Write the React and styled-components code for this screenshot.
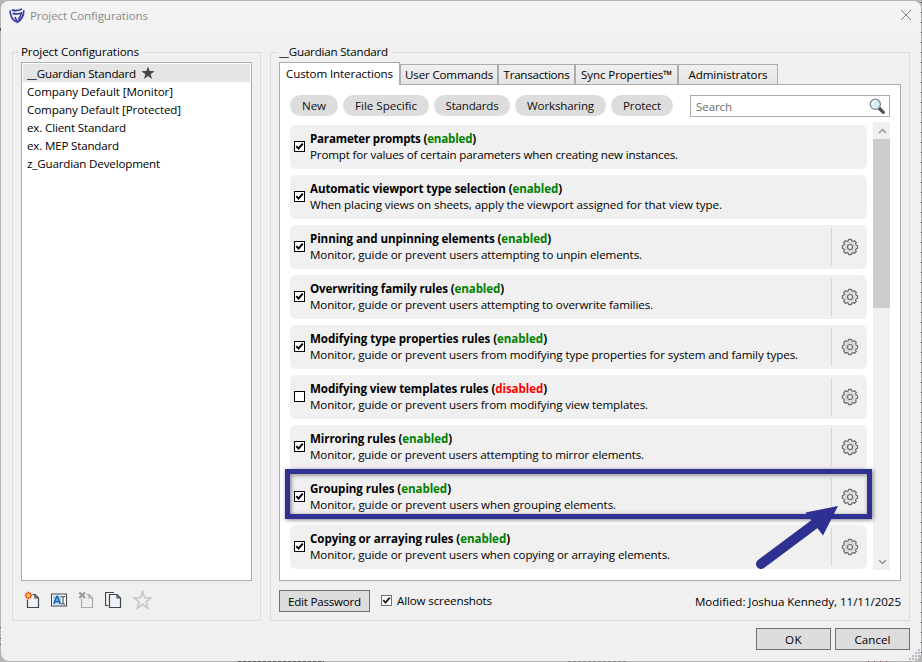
import React, { useLayoutEffect, useRef, useState } from "react"
import styled, { createGlobalStyle, css } from "styled-components"

const GlobalStyle = createGlobalStyle`
    * {
        box-sizing: border-box;
    }
    body {
        margin: 0;
        overflow: hidden;
        font-family: "Open Sans", "Noto Sans", sans-serif;
        font-size: 11.6px;
        line-height: 16px;
        color: #000;
    }
`

const configurations = [
    { name: "__Guardian Standard", width: 109, selected: true },
    { name: "Company Default [Monitor]", width: 146 },
    { name: "Company Default [Protected]", width: 154 },
    { name: "ex. Client Standard", width: 99 },
    { name: "ex. MEP Standard", width: 92 },
    { name: "z_Guardian Development", width: 133 },
]

const tabs = [
    { name: "Custom Interactions", tab: 121, width: 107, active: true },
    { name: "User Commands", tab: 98, width: 88 },
    { name: "Transactions", tab: 77, width: 66 },
    { name: "Sync Properties™", tab: 103, width: 91 },
    { name: "Administrators", tab: 100, width: 79 },
]

const filters = [
    { name: "New", pill: 48, width: 24 },
    { name: "File Specific", pill: 86, width: 62 },
    { name: "Standards", pill: 76, width: 53 },
    { name: "Worksharing", pill: 91, width: 67 },
    { name: "Protect", pill: 62, width: 38 },
]

const rules = [
    { title: "Parameter prompts", enabled: true, titleWidth: 166, text: "Prompt for values of certain parameters when creating new instances.", textWidth: 368 },
    { title: "Automatic viewport type selection", enabled: true, titleWidth: 252, text: "When placing views on sheets, apply the viewport assigned for that view type.", textWidth: 412 },
    { title: "Pinning and unpinning elements", enabled: true, titleWidth: 241, text: "Monitor, guide or prevent users attempting to unpin elements.", textWidth: 332, gear: true },
    { title: "Overwriting family rules", enabled: true, titleWidth: 194, text: "Monitor, guide or prevent users attempting to overwrite families.", textWidth: 343, gear: true },
    { title: "Modifying type properties rules", enabled: true, titleWidth: 237, text: "Monitor, guide or prevent users from modifying type properties for system and family types.", textWidth: 488, gear: true },
    { title: "Modifying view templates rules", enabled: false, titleWidth: 237, text: "Monitor, guide or prevent users from modifying view templates.", textWidth: 338, gear: true },
    { title: "Mirroring rules", enabled: true, titleWidth: 142, text: "Monitor, guide or prevent users attempting to mirror elements.", textWidth: 334, gear: true },
    { title: "Grouping rules", enabled: true, titleWidth: 141, text: "Monitor, guide or prevent users when grouping elements.", textWidth: 306, gear: true, highlighted: true },
    { title: "Copying or arraying rules", enabled: true, titleWidth: 200, text: "Monitor, guide or prevent users when copying or arraying elements.", textWidth: 360, gear: true },
]

const Desktop = styled.div`
    width: 922px;
    height: 662px;
    padding: 1px;
    background:
        repeating-linear-gradient(to bottom, transparent 0 2px, #333 2px 3px, transparent 3px 10px) 921px 0 / 1px 662px no-repeat,
        linear-gradient(#555, #555) 0 28px / 1px 3px no-repeat,
        linear-gradient(#7a5560, #7a5560) 0 627px / 1px 1px no-repeat,
        linear-gradient(#3d7a45, #3d7a45) 0 638px / 1px 1px no-repeat,
        linear-gradient(#7a5560, #7a5560) 0 644px / 1px 1px no-repeat,
        repeating-linear-gradient(to right, #555 0 3px, #999 3px 5px) 238px 661px / 86px 1px no-repeat,
        repeating-linear-gradient(to right, #888 0 3px, #b0b0b0 3px 5px) 568px 661px / 60px 1px no-repeat,
        repeating-linear-gradient(to right, #7a5560 0 1px, #b0b0b0 1px 6px) 868px 661px / 24px 1px no-repeat,
        #b4b4b4;
`

const Window = styled.div`
    width: 920px;
    height: 660px;
    display: flex;
    flex-direction: column;
    position: relative;
    background: #f0f0f0;
    border-radius: 8px;
    overflow: hidden;
`

const TitleBar = styled.header`
    height: 30px;
    flex: none;
    display: flex;
    align-items: center;
    padding: 0 9px 0 8px;
    background: #f3f3f3;
    color: #8b8b8b;
    > svg:last-child {
        margin-left: auto;
        margin-top: -2px;
    }
`

const TitleText = styled.div`
    margin-left: 5px;
`

const Body = styled.main`
    display: flex;
    gap: 9px;
    padding: 13px 11px 0;
`

const Group = styled.fieldset`
    width: ${props => props.$width}px;
    height: 577px;
    min-width: 0;
    margin: 0;
    padding: 2px 8px 0;
    border: 1px solid #dcdcdc;
`

const Legend = styled.legend`
    height: 16px;
    margin-left: -2px;
    padding: 0 4px 0 2px;
`

const ConfigList = styled.ul`
    width: 231px;
    height: 519px;
    margin: 0;
    padding: 1px;
    list-style: none;
    background: #fff;
    border: 1px solid #abadb3;
`

const ConfigItem = styled.li`
    height: 18px;
    display: flex;
    align-items: center;
    gap: 5px;
    padding: 2px 0 0 4px;
    background: ${props => props.$selected ? "#e5e5e5" : "transparent"};
    svg {
        margin-top: -2px;
    }
`

const Toolbar = styled.div`
    display: flex;
    align-items: center;
    height: 20px;
    margin-top: 9px;
    padding-left: 3px;
    gap: 11px;
`

const Tabs = styled.div`
    height: 22px;
    display: flex;
    align-items: flex-end;
`

const Tab = styled.div`
    width: ${props => props.$width}px;
    height: 20px;
    display: flex;
    align-items: center;
    justify-content: center;
    border: 1px solid #acacac;
    border-bottom: 0;
    background: linear-gradient(#f0f0f0, #e5e5e5);
    ${props => props.$active && css`
        height: 23px;
        margin-bottom: -1px;
        background: #fff;
        position: relative;
    `}
`

const TabPanel = styled.section`
    width: 622px;
    height: 497px;
    padding: 10px;
    background: #fff;
    border: 1px solid #acacac;
`

const FilterBar = styled.div`
    display: flex;
    gap: 5px;
`

const Pill = styled.div`
    width: ${props => props.$width}px;
    height: 21px;
    display: flex;
    align-items: center;
    justify-content: center;
    border-radius: 11px;
    background: #ddd;
    color: #111;
`

const SearchBox = styled.div`
    width: 200px;
    height: 22px;
    margin-left: auto;
    display: flex;
    align-items: center;
    justify-content: space-between;
    padding: 2px 3px 0 5px;
    border: 1px solid #abadb3;
    color: #6d6d6d;
    svg {
        margin-top: -2px;
    }
`

const ScrollArea = styled.div`
    display: flex;
    gap: 6px;
    height: 448px;
    margin-top: 5px;
`

const RuleList = styled.div`
    width: 577px;
    display: flex;
    flex-direction: column;
    gap: 6px;
    padding-top: 3px;
`

const RuleCard = styled.div`
    height: 44px;
    flex: none;
    position: relative;
    display: flex;
    align-items: center;
    padding-left: 4px;
    border-radius: 6px;
    background: #f0f0f0;
`

const RuleText = styled.div`
    margin-left: 5px;
    flex: 1;
`

const RuleTitle = styled.div`
    height: 16px;
    font-weight: 700;
`

const RuleInfo = styled.div`
    height: 16px;
`

const Status = styled.span`
    color: ${props => props.$enabled ? "#008000" : "#f00"};
`

const GearCell = styled.div`
    width: 36px;
    height: 38px;
    display: flex;
    align-items: center;
    justify-content: center;
    border-left: 1px solid #d5d5d5;
`

const Box = styled.span`
    width: 11px;
    height: 11px;
    flex: none;
    display: flex;
    background: #fff;
    border: 1px solid ${props => props.$soft ? "#707070" : "#000"};
    margin-bottom: 1px;
`

const Highlight = styled.div`
    position: absolute;
    left: -5px;
    top: -6px;
    width: 587px;
    height: 50px;
    z-index: 2;
    border: 5px solid #2e3192;
    box-shadow: 1px 1px 4px rgba(0, 0, 0, 0.5), inset 1px 1px 4px rgba(0, 0, 0, 0.5);
`

const Arrow = styled.svg`
    position: absolute;
    left: 460px;
    top: 25px;
    z-index: 3;
`

const Scrollbar = styled.div`
    width: 17px;
    height: 448px;
    display: flex;
    flex-direction: column;
    background: #f0f0f0;
`

const ScrollButton = styled.div`
    height: 17px;
    display: flex;
    align-items: center;
    justify-content: center;
    padding-left: 1px;
`

const Thumb = styled.div`
    height: 169px;
    margin-bottom: auto;
    background: #cdcdcd;
`

const PanelFooter = styled.div`
    width: 622px;
    height: 22px;
    margin-top: 9px;
    display: flex;
    align-items: center;
`

const Button = styled.button`
    width: ${props => props.$width}px;
    height: 22px;
    display: flex;
    align-items: center;
    justify-content: center;
    padding: 2px 0 0;
    font: inherit;
    color: #000;
    background: #ddd;
    border: 1px solid #707070;
`

const AllowLabel = styled.label`
    display: flex;
    align-items: center;
    gap: 5px;
    margin-left: 11px;
`

const Modified = styled.div`
    margin-left: auto;
    padding-top: 2px;
`

const DialogButtons = styled.footer`
    display: flex;
    justify-content: flex-end;
    gap: 4px;
    margin-top: 7px;
    padding-right: 11px;
`

const Grip = styled.svg`
    position: absolute;
    right: 0px;
    bottom: 1px;
`

const Line = styled.span`
    display: inline-block;
    white-space: pre;
    vertical-align: top;
`

// tightens or loosens the letters so that a label takes exactly its width
function FitText({ width, children }) {
    const ref = useRef(null)
    const [spacing, setSpacing] = useState(0)

    useLayoutEffect(() => {
        const el = ref.current
        el.style.letterSpacing = "0px"
        const natural = el.getBoundingClientRect().width
        const next = (width - natural) / el.textContent.length
        el.style.letterSpacing = `${next}px`
        setSpacing(next)
    }, [width])

    return <Line ref={ref} style={{ letterSpacing: `${spacing}px` }}>{children}</Line>
}

const Logo = () => (
    <svg width="16" height="16" viewBox="0 0 16 16" fill="none" stroke="#3a3a9c" strokeWidth="1.700">
        <path d="M3 1.900C6 3.200 9.500 2.800 13 1" />
        <path d="M1.100 2.400C1.200 7.400 3 11.300 6.800 13.800" />
        <path d="M14.700 2.200C15 7.400 12.800 11.400 8.300 14.200L6 9" />
        <path d="M3.600 5.400C6.500 6.200 9.500 6 12.300 5 12 7.700 11 9.700 9.200 11.300" />
    </svg>
)

const CloseIcon = () => (
    <svg width="12" height="12" viewBox="0 0 12 12" stroke="#858585" strokeWidth="1">
        <path d="M1 1 11 11M11 1 1 11" />
    </svg>
)

const Star = () => (
    <svg width="14" height="14" viewBox="0 0 14 14">
        <path d="M7 .4 8.6 5.1 13.6 5.2 9.6 8.2 11.1 13 7 10.1 2.9 13 4.4 8.2.4 5.2 5.4 5.1Z" fill="#444" />
    </svg>
)

const Page = ({ faded }) => (
    <path
        d="M3.500 3.500h7.500l3.500 3.500v9.500h-11z M11 3.500v3.500h3.500"
        fill={faded ? "#efefef" : "#eff2f6"}
        stroke={faded ? "#aaa" : "#3f4650"}
        strokeWidth="1.200"
    />
)

const NewIcon = () => (
    <svg width="16" height="18" viewBox="0 0 16 18">
        <Page />
        <circle cx="4.500" cy="4.500" r="4.200" fill="#f0f0f0" />
        <path d="M4.500 .8v7.400M.8 4.500h7.400M2 2l5 5M7 2 2 7" stroke="#d8380c" strokeWidth="1.500" />
        <circle cx="4.500" cy="4.500" r="1.900" fill="#ffd23c" />
    </svg>
)

const RenameIcon = () => (
    <svg width="16" height="14" viewBox="0 0 16 14">
        <rect x=".5" y="1" width="15" height="12" fill="#fff" stroke="#3a414c" />
        <rect x="2" y="2.500" width="8" height="9" fill="#a5d2f0" />
        <path d="M3 11 5.700 3.500h.8L9.200 11M4 8.500h4.200" fill="none" stroke="#1c5fa8" strokeWidth="1.500" />
        <path d="M10 3.500h1.200l.8.6.8-.6H14M12 4v6.500M10 11h1.200l.8-.6.8.6H14" fill="none" stroke="#2c333d" />
    </svg>
)

const DeleteIcon = () => (
    <svg width="16" height="18" viewBox="0 0 16 18">
        <Page faded />
        <rect x="0" y="0" width="8.500" height="8" fill="#f0f0f0" />
        <path d="M1.300 1.500 7 7M7 1.500 1.300 7" stroke="#999" strokeWidth="2.200" />
    </svg>
)

const CopyIcon = () => (
    <svg width="17" height="18" viewBox="0 0 17 18">
        <path d="M3.500 14.500h-3v-13h8.500" fill="none" stroke="#3f4650" strokeWidth="1.200" />
        <path d="M4.500 3.500h7.500l3.500 3.500v9.500h-11z M12 3.500v3.500h3.500" fill="#eff2f6" stroke="#3f4650" strokeWidth="1.200" />
    </svg>
)

const FavoriteIcon = () => (
    <svg width="20" height="20" viewBox="0 0 20 20">
        <path d="M9.500 1.500 11.700 7.700 17.900 7.900 13 11.800 14.800 18 9.500 14.400 4.200 18 6 11.800 1.100 7.900 7.300 7.700Z" fill="#f0f0f0" stroke="#cbcbcb" strokeWidth="1.900" />
    </svg>
)

const Magnifier = () => (
    <svg width="17" height="17" viewBox="0 0 17 17">
        <path d="M10 10 14.300 14.300" stroke="#4d4d4d" strokeWidth="3.200" strokeLinecap="round" />
        <circle cx="6.300" cy="6.300" r="5.100" fill="#d9eef2" stroke="#7d8a8e" strokeWidth="1.300" />
        <path d="M3.300 6C3.500 4.300 4.800 3.300 6.500 3.200" fill="none" stroke="#fff" strokeWidth="1.200" />
    </svg>
)

const Gear = () => (
    <svg width="18" height="18" viewBox="-9 -9 18 18" fill="none" stroke="#666a6e">
        <path
            d="M-1.700-6.300-1.300-7.600H1.300L1.700-6.300 3.300-5.600 4.500-6.300 6.300-4.500 5.600-3.300 6.300-1.700 7.600-1.300V1.300L6.300 1.700 5.600 3.300 6.300 4.500 4.500 6.300 3.300 5.600 1.700 6.300 1.300 7.600H-1.300L-1.700 6.300-3.300 5.600-4.500 6.300-6.300 4.500-5.600 3.300-6.300 1.700-7.600 1.300V-1.300L-6.300-1.700-5.600-3.300-6.300-4.500-4.500-6.300-3.300-5.600Z"
            fill="#e6e6e6"
            strokeLinejoin="round"
            strokeWidth="1.200"
        />
        <circle r="4.300" stroke="#cfcfcf" strokeWidth="1.500" />
        <circle r="2.500" fill="#f0f0f0" strokeWidth="1.200" />
    </svg>
)

const CheckBox = ({ checked, soft }) => (
    <Box $soft={soft}>
        {checked && (
            <svg width="9" height="9" viewBox="0 0 9 9">
                <path d="M1.300 4.200 3.500 6.600 7.800 1.600" fill="none" stroke={soft ? "#212121" : "#000"} strokeWidth="1.900" />
            </svg>
        )}
    </Box>
)

const Chevron = ({ down }) => (
    <svg width="9" height="6" viewBox="0 0 9 6" fill="none" stroke="#8f8f8f" strokeWidth="1.300">
        <path d={down ? "M1 1 4.500 4.500 8 1" : "M1 5 4.500 1.500 8 5"} />
    </svg>
)

const Rule = ({ rule }) => (
    <RuleCard>
        <CheckBox checked={rule.enabled} />
        <RuleText>
            <RuleTitle>
                <FitText width={rule.titleWidth}>
                    {rule.title} (<Status $enabled={rule.enabled}>{rule.enabled ? "enabled" : "disabled"}</Status>)
                </FitText>
            </RuleTitle>
            <RuleInfo><FitText width={rule.textWidth}>{rule.text}</FitText></RuleInfo>
        </RuleText>
        {rule.gear && <GearCell><Gear /></GearCell>}
        {rule.highlighted && (
            <>
                <Highlight />
                <Arrow width="100" height="80" viewBox="750 500 100 80">
                    <path d="M761 564 816 523" stroke="#2e3192" strokeWidth="10" strokeLinecap="round" />
                    <path d="M838 506 805.500 512.500 823 535.500Z" fill="#2e3192" />
                </Arrow>
            </>
        )}
    </RuleCard>
)

const dots = [[9, 1], [6, 4], [9, 4], [3, 7], [6, 7], [9, 7], [0, 10], [3, 10], [6, 10], [9, 10]]

export default function App() {
    return (
        <>
            <GlobalStyle />
            <Desktop>
                <Window>
                    <TitleBar>
                        <Logo />
                        <TitleText><FitText width={118}>Project Configurations</FitText></TitleText>
                        <CloseIcon />
                    </TitleBar>
                    <Body>
                        <Group $width={249}>
                            <Legend><FitText width={118}>Project Configurations</FitText></Legend>
                            <ConfigList>
                                {configurations.map(item => (
                                    <ConfigItem key={item.name} $selected={item.selected}>
                                        <FitText width={item.width}>{item.name}</FitText>
                                        {item.selected && <Star />}
                                    </ConfigItem>
                                ))}
                            </ConfigList>
                            <Toolbar>
                                <NewIcon />
                                <RenameIcon />
                                <DeleteIcon />
                                <CopyIcon />
                                <FavoriteIcon />
                            </Toolbar>
                        </Group>
                        <Group $width={640}>
                            <Legend><FitText width={109}>__Guardian Standard</FitText></Legend>
                            <Tabs>
                                {tabs.map(tab => (
                                    <Tab key={tab.name} $width={tab.tab} $active={tab.active}>
                                        <FitText width={tab.width}>{tab.name}</FitText>
                                    </Tab>
                                ))}
                            </Tabs>
                            <TabPanel>
                                <FilterBar>
                                    {filters.map(filter => (
                                        <Pill key={filter.name} $width={filter.pill}>
                                            <FitText width={filter.width}>{filter.name}</FitText>
                                        </Pill>
                                    ))}
                                    <SearchBox>
                                        <FitText width={36}>Search</FitText>
                                        <Magnifier />
                                    </SearchBox>
                                </FilterBar>
                                <ScrollArea>
                                    <RuleList>
                                        {rules.map(rule => <Rule key={rule.title} rule={rule} />)}
                                    </RuleList>
                                    <Scrollbar>
                                        <ScrollButton><Chevron /></ScrollButton>
                                        <Thumb />
                                        <ScrollButton><Chevron down /></ScrollButton>
                                    </Scrollbar>
                                </ScrollArea>
                            </TabPanel>
                            <PanelFooter>
                                <Button $width={91}><FitText width={73}>Edit Password</FitText></Button>
                                <AllowLabel>
                                    <CheckBox checked soft />
                                    <FitText width={95}>Allow screenshots</FitText>
                                </AllowLabel>
                                <Modified><FitText width={206}>Modified: Joshua Kennedy, 11/11/2025</FitText></Modified>
                            </PanelFooter>
                        </Group>
                    </Body>
                    <DialogButtons>
                        <Button $width={75}><FitText width={17}>OK</FitText></Button>
                        <Button $width={75}><FitText width={36}>Cancel</FitText></Button>
                    </DialogButtons>
                    <Grip width="12" height="12" fill="#b4bccb">
                        {dots.map(([x, y]) => <rect key={`${x}-${y}`} x={x} y={y} width="2" height="2" />)}
                    </Grip>
                </Window>
            </Desktop>
        </>
    )
}
